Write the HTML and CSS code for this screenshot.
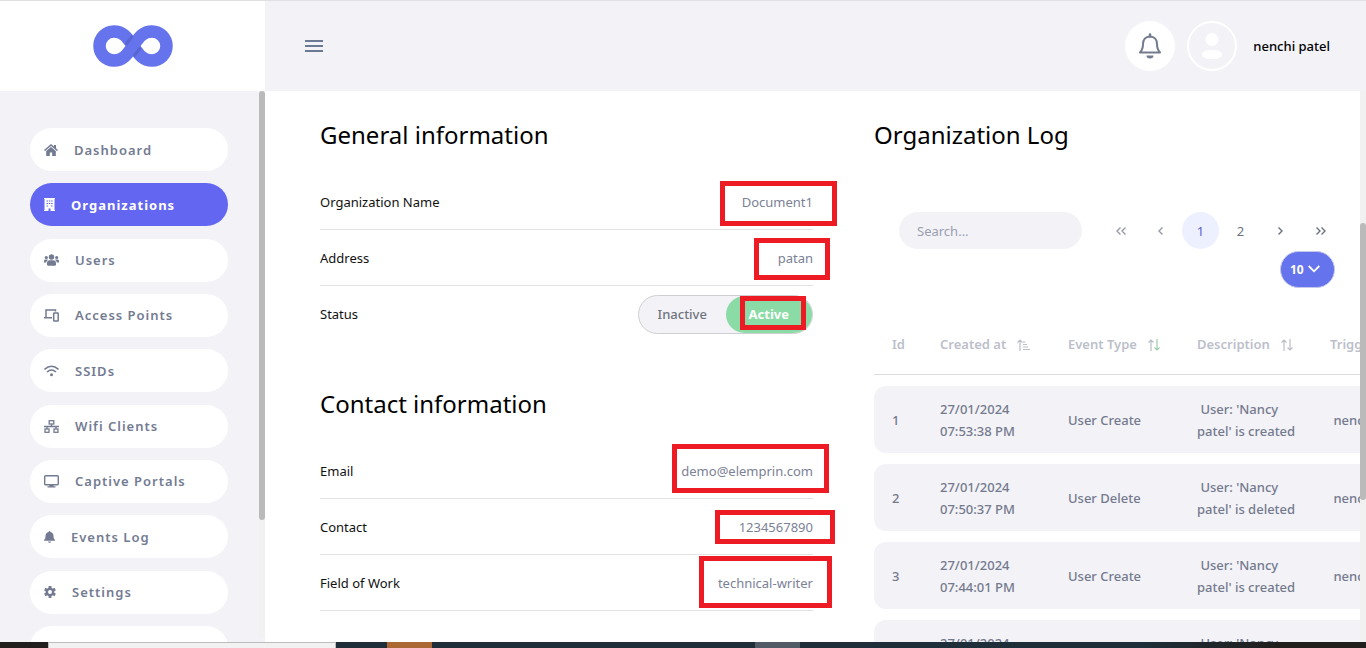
FILE: index.html
```html
<!DOCTYPE html>
<html lang="en">
<head>
<meta charset="utf-8">
<title>Organization details</title>
<link rel="stylesheet" href="styles.css">
</head>
<body>
<header class="topbar">
  <a class="brand" href="#" aria-label="Home">
    <svg width="80" height="42" viewBox="0 0 80 42" fill="none" stroke="#6574ec" stroke-width="12.500">
      <path d="M21 6.500A14.500 14.500 0 0 0 21 35.500C31 35.500 35 28 40 21S49 6.500 59 6.500A14.500 14.500 0 0 1 59 35.500C49 35.500 45 28 40 21S31 6.500 21 6.500Z"/>
      <path d="M33 19.500L39.500 11M41 31L47.500 22.500" stroke="#525fc8" stroke-width="3" opacity=".7"/>
    </svg>
  </a>
  <div class="tools">
    <button class="plain menu" aria-label="Menu"><svg width="18" height="14" viewBox="0 0 18 14" stroke="#6b7a94" stroke-width="1.800"><path d="M0 2h18M0 7h18M0 12h18"/></svg></button>
    <button class="plain bell" aria-label="Notifications"><svg width="24" height="26" viewBox="0 0 24 26"><path d="M12 3.500c-4.600 0-7 3.300-7 7.500 0 5-1 6.500-3 8.500h20c-2-2-3-3.500-3-8.500 0-4.200-2.400-7.500-7-7.500z" fill="none" stroke="#737b8f" stroke-width="2" stroke-linejoin="round"/><path d="M12 1.500v2" stroke="#737b8f" stroke-width="2.500" stroke-linecap="round"/><path d="M8.500 22.500h7a3.500 3 0 0 1-7 0z" fill="#737b8f"/></svg></button>
    <button class="plain avatar" aria-label="Account"><svg width="20" height="26" viewBox="0 0 20 26" fill="#fff"><circle cx="10" cy="6.500" r="6.500"/><rect y="17" width="20" height="9" rx="8" ry="4.500"/></svg></button>
    <span class="username">nenchi patel</span>
  </div>
</header>
<div class="body">
  <aside class="sidebar">
    <nav class="nav">
      <a href="#"><svg width="14" height="12" viewBox="0 0 14 12"><path d="M7 0L0 6l1 1 6-5 6 5 1-1-2-1.800V1h-2v1.500z"/><path d="M7 3L2.200 7v5h3.600V8.500h2.400V12h3.600V7z"/></svg>Dashboard</a>
      <a class="current" href="#"><svg width="11" height="13" viewBox="0 0 11 13"><path fill-rule="evenodd" d="M0 0h11v1h-.500v11h.500v1H6.500v-2.500h-2V13H0v-1h.500V1H0zM2.500 2.500v1h1.500v-1zm2.300 0v1h1.500v-1zm2.300 0v1h1.500v-1zM2.500 5v1h1.500V5zm2.300 0v1h1.500V5zm2.300 0v1h1.500V5zM2.500 7.500v1h1.500v-1zm4.600 0v1h1.500v-1z"/></svg>Organizations</a>
      <a href="#"><svg width="15" height="12" viewBox="0 0 15 12"><circle cx="7.500" cy="3" r="2.700"/><circle cx="2.300" cy="3.500" r="1.600"/><circle cx="12.700" cy="3.500" r="1.600"/><path d="M3 11V9c0-2 1.500-2.700 3-2.700h3c1.500 0 3 .700 3 2.700v2l-1 .700H4zM0 8.500V7c0-1 .800-1.500 1.500-1.500h2L4 6C2.800 6.700 2.300 7.500 2.200 8.500zM15 8.500V7c0-1-.800-1.500-1.500-1.500h-2L11 6c1.200.700 1.700 1.500 1.800 2.500z"/></svg>Users</a>
      <a href="#"><svg width="15" height="13" viewBox="0 0 15 13" fill="none" stroke="#737b92" stroke-width="1.500"><path d="M2 8V1h9.500v1.500M0 8.700h8"/><rect x="9.700" y="4" width="4.500" height="8" rx=".5"/></svg>Access Points</a>
      <a href="#"><svg width="15" height="12" viewBox="0 0 15 12"><path d="M.500 4.500q7-6.500 14 0M3 7q4.500-4 9 0" fill="none" stroke="#737b92" stroke-width="1.600"/><circle cx="7.500" cy="9.700" r="1.500"/></svg>SSIDs</a>
      <a href="#"><svg width="15" height="13" viewBox="0 0 15 13" fill="none" stroke="#737b92" stroke-width="1.300"><rect x="5.200" y=".700" width="4.600" height="3.300"/><path d="M7.500 4v2.500M0 6.500h15M3 6.500V9M12 6.500V9"/><rect x="1" y="9" width="4" height="3.300"/><rect x="10" y="9" width="4" height="3.300"/></svg>Wifi Clients</a>
      <a href="#"><svg width="15" height="13" viewBox="0 0 15 13"><rect x=".700" y=".700" width="13.600" height="9" rx="1" fill="none" stroke="#737b92" stroke-width="1.400"/><path d="M5.500 10h4v1.200h2V12.500h-8v-1.300h2z"/></svg>Captive Portals</a>
      <a href="#"><svg width="11" height="12" viewBox="0 0 11 12"><path d="M5.500 0c.6 0 .8.400.8.900C8.600 1.400 9.500 3 9.500 5c0 2.500.5 3 1.500 4v.800H0V9c1-1 1.500-1.500 1.500-4 0-2 .9-3.600 3.200-4.100 0-.5.200-.9.800-.9zM4 10.500h3a1.500 1.300 0 0 1-3 0z"/></svg>Events Log</a>
      <a href="#"><svg width="12" height="12" viewBox="0 0 12 12"><circle cx="6" cy="6" r="3.200" fill="none" stroke="#737b92" stroke-width="2.400"/><path d="M6 0v2.500M6 9.500V12M.800 3l2.200 1.300M9 7.700L11.200 9M.800 9L3 7.700M9 4.300L11.200 3" stroke="#737b92" stroke-width="2.800"/></svg>Settings</a>
      <a href="#" aria-label="More"></a>
    </nav>
    <div class="track"><div class="thumb side-thumb"></div></div>
  </aside>
  <main class="content">
    <div class="details">
      <section>
        <h2>General information</h2>
        <div class="row"><span>Organization Name</span><span class="value">Document1</span><i class="mark mark-name"></i></div>
        <div class="row"><span>Address</span><span class="value">patan</span><i class="mark mark-address"></i></div>
        <div class="row last"><span>Status</span>
          <div class="switch">
            <label><input type="radio" name="status">Inactive</label>
            <label class="on"><input type="radio" name="status" checked>Active</label>
          </div><i class="mark mark-status"></i></div>
      </section>
      <section>
        <h2>Contact information</h2>
        <div class="row"><span>Email</span><span class="value">demo@elemprin.com</span><i class="mark mark-email"></i></div>
        <div class="row"><span>Contact</span><span class="value">1234567890</span><i class="mark mark-contact"></i></div>
        <div class="row"><span>Field of Work</span><span class="value">technical-writer</span><i class="mark mark-field"></i></div>
      </section>
    </div>
    <section class="log">
      <h2>Organization Log</h2>
      <div class="toolbar">
        <input class="search" type="text" placeholder="Search..." aria-label="Search">
        <div class="pages">
          <button class="plain off" aria-label="First page"><svg width="10" height="8" viewBox="0 0 10 8"><path d="M4.500.500L1 4l3.500 3.500M9.500.500L6 4l3.500 3.500"/></svg></button>
          <button class="plain off" aria-label="Previous page"><svg width="5" height="8" viewBox="0 0 5 8"><path d="M4.500.500L1 4l3.500 3.500"/></svg></button>
          <button class="plain active">1</button>
          <button class="plain">2</button>
          <button class="plain" aria-label="Next page"><svg width="5" height="8" viewBox="0 0 5 8"><path d="M.500.500L4 4 .500 7.500"/></svg></button>
          <button class="plain" aria-label="Last page"><svg width="10" height="8" viewBox="0 0 10 8"><path d="M.500.500L4 4 .500 7.500M5.500.500L9 4 5.500 7.500"/></svg></button>
        </div>
        <div class="size">
          <select aria-label="Rows per page"><option>10</option><option>25</option></select>
          <svg width="12" height="8" viewBox="0 0 12 8" fill="none" stroke="#fff" stroke-width="1.800"><path d="M.700 1L6 6.300 11.300 1"/></svg>
        </div>
      </div>
      <table>
        <colgroup><col class="c-id"><col class="c-date"><col class="c-event"><col class="c-desc"><col class="c-by"></colgroup>
        <thead><tr>
          <th>Id</th>
          <th>Created at<svg width="13" height="12" viewBox="0 0 13 12"><path d="M3 12V1M.500 3.500L3 1l2.500 2.500M6 3h2.500M6 5.500h4M6 8h5M6 10.500h7"/></svg></th>
          <th>Event Type<svg width="12" height="12" viewBox="0 0 12 12"><path d="M3 12V1M.500 3.500L3 1l2.500 2.500" stroke="#b4bfc4"/><path d="M9 0v11M6.500 8.500L9 11l2.500-2.500" stroke="#9ccda8"/></svg></th>
          <th>Description<svg width="12" height="12" viewBox="0 0 12 12"><path d="M3 12V1M.500 3.500L3 1l2.500 2.500M9 0v11M6.500 8.500L9 11l2.500-2.500"/></svg></th>
          <th>Triggered by</th>
        </tr></thead>
        <tbody>
          <tr><td>1</td><td>27/01/2024<br>07:53:38 PM</td><td>User Create</td><td>&nbsp;User: 'Nancy<br>patel' is created</td><td>&nbsp;nenchi patel</td></tr>
          <tr><td>2</td><td>27/01/2024<br>07:50:37 PM</td><td>User Delete</td><td>&nbsp;User: 'Nancy<br>patel' is deleted</td><td>&nbsp;nenchi patel</td></tr>
          <tr><td>3</td><td>27/01/2024<br>07:44:01 PM</td><td>User Create</td><td>&nbsp;User: 'Nancy<br>patel' is created</td><td>&nbsp;nenchi patel</td></tr>
          <tr><td></td><td>27/01/2024<br>&nbsp;</td><td></td><td>&nbsp;User: 'Nancy<br>&nbsp;</td><td></td></tr>
        </tbody>
      </table>
    </section>
    <div class="track"><div class="thumb main-thumb"></div></div>
  </main>
</div>
<footer class="taskbar"><span class="start"></span><span class="find"></span><span class="gap"></span><span class="app"></span><span class="mid"></span><span class="task"></span><span class="rest"></span></footer>
</body>
</html>
```
FILE: styles.css
```css
* { box-sizing: border-box; }
body {
  margin: 0;
  height: 100vh;
  display: flex;
  flex-direction: column;
  overflow: hidden;
  font: 13px/22px "Noto Sans", sans-serif;
  color: #111;
  background: #fff;
}
a { color: inherit; text-decoration: none; }
input, select, button { font: inherit; color: inherit; }
h2 { margin: 0; font-size: 24px; line-height: 32px; font-weight: 400; color: #000; }
.plain { border: 0; padding: 0; background: none; display: flex; align-items: center; justify-content: center; }

.topbar { display: flex; flex: none; height: 91px; border-top: 1px solid #e0e0e2; }
.brand { width: 265px; display: flex; align-items: center; justify-content: center; }
.tools { flex: 1; display: flex; align-items: center; padding: 0 36px 0 40px; background: #f3f2f7; }
.bell, .avatar { width: 50px; height: 50px; border-radius: 50%; margin-right: 12px; }
.bell { background: #fff; margin-left: auto; }
.avatar { border: 2px solid #fff; margin-right: 16px; }
.username { font-size: 13px; font-weight: 500; color: #000; }

.body { flex: 1; min-height: 0; display: flex; }
.sidebar { width: 265px; flex: none; display: flex; justify-content: space-between; background: #f3f2f7; padding-bottom: 5px; overflow: hidden; }
.nav { width: 198px; height: 541px; margin: 37px 0 0 30px; display: flex; flex-direction: column; justify-content: space-between; }
.nav a { height: 43px; flex: none; border-radius: 22px; background: #fff; display: flex; align-items: center; gap: 16px; padding: 0 14px; color: #737b92; fill: #737b92; font-weight: 600; letter-spacing: 1px; }
.nav .current { background: #6366f1; color: #fff; fill: #fff; font-weight: 700; }
.track { width: 6px; flex: none; background: #f1f1f1; }
.thumb { background: #bababa; border-radius: 3px; }
.side-thumb { height: 429px; }
.main-thumb { height: 277px; margin-top: 132px; }

.content { flex: 1; min-width: 0; display: flex; padding-left: 55px; overflow: hidden; }
.details { flex: 1; margin-right: 61px; padding-top: 28px; display: flex; flex-direction: column; gap: 46px; }
.details h2 { margin-bottom: 23px; }
.row { position: relative; height: 56px; display: flex; align-items: center; justify-content: space-between; border-bottom: 1px solid #e3e3e6; }
.row.last { border-bottom: 0; }
.value { color: #7b8196; }
.switch { display: flex; width: 175px; height: 39px; border: 1px solid #cfcfd3; border-radius: 20px; background: #f3f2f7; font-weight: 500; color: #6f757e; }
.switch label { flex: 1; display: flex; align-items: center; justify-content: center; border-radius: 20px; }
.switch input { position: absolute; opacity: 0; }
.switch .on { background: #8adba5; color: #fff; font-weight: 700; }

.mark { position: absolute; border: 5px solid #ed1c24; }
.mark-name { right: -24px; top: 7px; width: 117px; height: 45px; }
.mark-address { right: -17px; top: 8px; width: 76px; height: 42px; }
.mark-status { right: 7px; top: 10px; width: 66px; height: 34px; }
.mark-email { right: -16px; top: 1px; width: 157px; height: 49px; }
.mark-contact { right: -22px; top: 11px; width: 120px; height: 34px; }
.mark-field { right: -19px; top: 1px; width: 133px; height: 52px; }

.log { width: 486px; flex: none; padding-top: 28px; overflow: hidden; }
.toolbar { display: flex; flex-wrap: wrap; align-items: center; justify-content: space-between; row-gap: 2px; padding: 61px 21px 0 25px; }
.search { width: 183px; height: 37px; border: 0; border-radius: 19px; padding: 0 18px; background: #f3f2f7; }
.search::placeholder { color: #9a9faf; opacity: 1; }
.pages { display: flex; gap: 3px; }
.pages button { width: 37px; height: 37px; border-radius: 50%; color: #6b7280; }
.pages svg { fill: none; stroke: #6b7280; stroke-width: 1.4; }
.pages .off { opacity: .7; }
.pages .active { background: #edf1ff; color: #5b5bd6; }
.size { position: relative; margin: 0 4px 0 auto; display: flex; }
.size select { appearance: none; width: 55px; height: 37px; border: 1px solid #c5c9ea; border-radius: 19px; background: #6574ec; color: #fff; font-size: 12px; font-weight: 700; padding: 0 9px; }
.size svg { position: absolute; right: 15px; top: 14px; pointer-events: none; }

table { table-layout: fixed; width: 558px; border-collapse: separate; border-spacing: 0 11px; margin-top: 14px; }
.c-id { width: 48px; }
.c-date { width: 128px; }
.c-event { width: 129px; }
.c-desc { width: 133px; }
.c-by { width: 120px; }
th, td { padding: 0 0 0 18px; text-align: left; white-space: nowrap; }
th { height: 62px; font-weight: 600; color: #bcbfca; border-bottom: 1px solid #dcdde3; }
th svg { margin-left: 11px; vertical-align: -2px; fill: none; stroke: #bcbfca; stroke-width: 1.2; }
td { height: 67px; color: #737a8e; background: #f3f2f7; font-weight: 500; }
td:first-child { border-radius: 12px 0 0 12px; }

.taskbar { flex: none; height: 6px; display: flex; background: #1e2f39; }
.start { width: 48px; background: #211e1d; }
.find { width: 288px; background: #f2f2f2; border: solid #bdbdbd; border-width: 1px 1px 0; }
.gap { width: 51px; }
.app { width: 45px; background: #ab6832; }
.mid { width: 323px; }
.task { width: 45px; background: #505b65; }
.rest { flex: 1; background: linear-gradient(90deg, #1e2f39 60%, #211e1d 85%); }
```
